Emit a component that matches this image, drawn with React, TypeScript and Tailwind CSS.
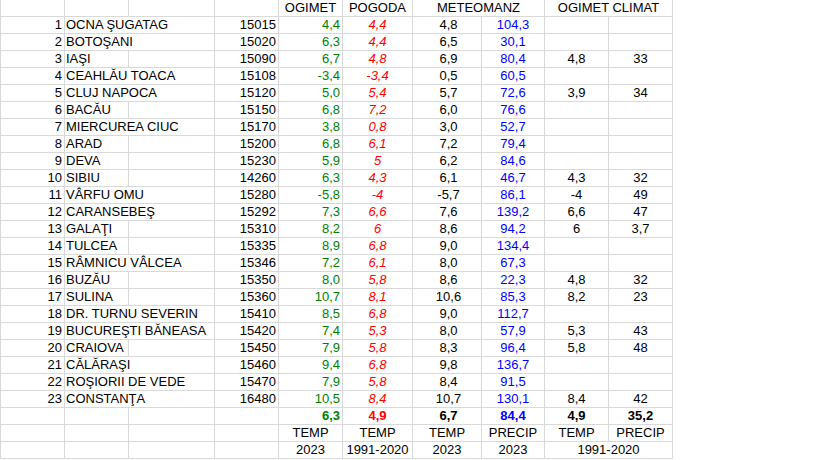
import type { ReactNode } from 'react';

type Row = {
  nr: number;
  name: string;
  code: string;
  ogimet: string;
  pogoda: string;
  mTemp: string;
  mPrecip: string;
  cTemp?: string;
  cPrecip?: string;
};

const rows: Row[] = [
  { nr: 1, name: 'OCNA ŞUGATAG', code: '15015', ogimet: '4,4', pogoda: '4,4', mTemp: '4,8', mPrecip: '104,3' },
  { nr: 2, name: 'BOTOŞANI', code: '15020', ogimet: '6,3', pogoda: '4,4', mTemp: '6,5', mPrecip: '30,1' },
  { nr: 3, name: 'IAŞI', code: '15090', ogimet: '6,7', pogoda: '4,8', mTemp: '6,9', mPrecip: '80,4', cTemp: '4,8', cPrecip: '33' },
  { nr: 4, name: 'CEAHLĂU TOACA', code: '15108', ogimet: '-3,4', pogoda: '-3,4', mTemp: '0,5', mPrecip: '60,5' },
  { nr: 5, name: 'CLUJ NAPOCA', code: '15120', ogimet: '5,0', pogoda: '5,4', mTemp: '5,7', mPrecip: '72,6', cTemp: '3,9', cPrecip: '34' },
  { nr: 6, name: 'BACĂU', code: '15150', ogimet: '6,8', pogoda: '7,2', mTemp: '6,0', mPrecip: '76,6' },
  { nr: 7, name: 'MIERCUREA CIUC', code: '15170', ogimet: '3,8', pogoda: '0,8', mTemp: '3,0', mPrecip: '52,7' },
  { nr: 8, name: 'ARAD', code: '15200', ogimet: '6,8', pogoda: '6,1', mTemp: '7,2', mPrecip: '79,4' },
  { nr: 9, name: 'DEVA', code: '15230', ogimet: '5,9', pogoda: '5', mTemp: '6,2', mPrecip: '84,6' },
  { nr: 10, name: 'SIBIU', code: '14260', ogimet: '6,3', pogoda: '4,3', mTemp: '6,1', mPrecip: '46,7', cTemp: '4,3', cPrecip: '32' },
  { nr: 11, name: 'VÂRFU OMU', code: '15280', ogimet: '-5,8', pogoda: '-4', mTemp: '-5,7', mPrecip: '86,1', cTemp: '-4', cPrecip: '49' },
  { nr: 12, name: 'CARANSEBEŞ', code: '15292', ogimet: '7,3', pogoda: '6,6', mTemp: '7,6', mPrecip: '139,2', cTemp: '6,6', cPrecip: '47' },
  { nr: 13, name: 'GALAŢI', code: '15310', ogimet: '8,2', pogoda: '6', mTemp: '8,6', mPrecip: '94,2', cTemp: '6', cPrecip: '3,7' },
  { nr: 14, name: 'TULCEA', code: '15335', ogimet: '8,9', pogoda: '6,8', mTemp: '9,0', mPrecip: '134,4' },
  { nr: 15, name: 'RÂMNICU VÂLCEA', code: '15346', ogimet: '7,2', pogoda: '6,1', mTemp: '8,0', mPrecip: '67,3' },
  { nr: 16, name: 'BUZĂU', code: '15350', ogimet: '8,0', pogoda: '5,8', mTemp: '8,6', mPrecip: '22,3', cTemp: '4,8', cPrecip: '32' },
  { nr: 17, name: 'SULINA', code: '15360', ogimet: '10,7', pogoda: '8,1', mTemp: '10,6', mPrecip: '85,3', cTemp: '8,2', cPrecip: '23' },
  { nr: 18, name: 'DR. TURNU SEVERIN', code: '15410', ogimet: '8,5', pogoda: '6,8', mTemp: '9,0', mPrecip: '112,7' },
  { nr: 19, name: 'BUCUREŞTI BĂNEASA', code: '15420', ogimet: '7,4', pogoda: '5,3', mTemp: '8,0', mPrecip: '57,9', cTemp: '5,3', cPrecip: '43' },
  { nr: 20, name: 'CRAIOVA', code: '15450', ogimet: '7,9', pogoda: '5,8', mTemp: '8,3', mPrecip: '96,4', cTemp: '5,8', cPrecip: '48' },
  { nr: 21, name: 'CĂLĂRAŞI', code: '15460', ogimet: '9,4', pogoda: '6,8', mTemp: '9,8', mPrecip: '136,7' },
  { nr: 22, name: 'ROŞIORII DE VEDE', code: '15470', ogimet: '7,9', pogoda: '5,8', mTemp: '8,4', mPrecip: '91,5' },
  { nr: 23, name: 'CONSTANŢA', code: '16480', ogimet: '10,5', pogoda: '8,4', mTemp: '10,7', mPrecip: '130,1', cTemp: '8,4', cPrecip: '42' },
];

// names short enough to stay inside column B (grid line stays visible)
const shortNames = ['IAŞI', 'BACĂU', 'ARAD', 'DEVA', 'SIBIU', 'GALAŢI', 'TULCEA', 'BUZĂU', 'SULINA', 'CRAIOVA'];

const Cell = ({ children, className = '', first = false }: { children?: ReactNode; className?: string; first?: boolean }) => (
  <div
    className={`h-[17px] leading-[16px] whitespace-nowrap overflow-visible border-r border-b border-[#d9d9d9] ${first ? 'border-l' : ''} ${className}`}
  >
    {children}
  </div>
);

const EmptyLeft = () => (
  <>
    <Cell first />
    <Cell />
    <Cell />
    <Cell />
  </>
);

export default function App() {
  return (
    <div className="w-[819px] h-[460px] bg-white text-black text-[13px]" style={{ fontFamily: '"Liberation Sans", Arial, sans-serif' }}>
      <div className="grid w-[673px] grid-cols-[65px_64px_86px_64px_64px_70px_69px_63px_64px_64px]">
        {/* header */}
        <EmptyLeft />
        <Cell className="text-center">OGIMET</Cell>
        <Cell className="text-center">POGODA</Cell>
        <Cell className="col-span-2 text-center">METEOMANZ</Cell>
        <Cell className="col-span-2 text-center">OGIMET CLIMAT</Cell>

        {rows.map((r) => {
          const short = shortNames.includes(r.name);
          return (
            <div key={r.nr} className="contents">
              <Cell first className="text-right pr-[2px]">{r.nr}</Cell>
              {short ? (
                <>
                  <Cell className="pl-[1px]">{r.name}</Cell>
                  <Cell />
                </>
              ) : (
                <Cell className="col-span-2 pl-[1px]">{r.name}</Cell>
              )}
              <Cell className="text-right pr-[2px]">{r.code}</Cell>
              <Cell className="text-right pr-[2px] text-[#008000]">{r.ogimet}</Cell>
              <Cell className="text-center italic text-[#ff0000]">{r.pogoda}</Cell>
              <Cell className="text-center pl-[3px]">{r.mTemp}</Cell>
              <Cell className="text-center text-[#0000ff]">{r.mPrecip}</Cell>
              <Cell className="text-center">{r.cTemp}</Cell>
              <Cell className="text-center">{r.cPrecip}</Cell>
            </div>
          );
        })}

        {/* averages */}
        <EmptyLeft />
        <Cell className="text-right pr-[2px] font-bold text-[#008000]">6,3</Cell>
        <Cell className="text-center font-bold text-[#ff0000]">4,9</Cell>
        <Cell className="text-center pl-[3px] font-bold">6,7</Cell>
        <Cell className="text-center font-bold text-[#0000ff]">84,4</Cell>
        <Cell className="text-center font-bold">4,9</Cell>
        <Cell className="text-center font-bold">35,2</Cell>

        {/* labels */}
        <EmptyLeft />
        <Cell className="text-center">TEMP</Cell>
        <Cell className="text-center">TEMP</Cell>
        <Cell className="text-center">TEMP</Cell>
        <Cell className="text-center">PRECIP</Cell>
        <Cell className="text-center">TEMP</Cell>
        <Cell className="text-center">PRECIP</Cell>

        <EmptyLeft />
        <Cell className="text-center">2023</Cell>
        <Cell className="text-center">1991-2020</Cell>
        <Cell className="text-center">2023</Cell>
        <Cell className="text-center">2023</Cell>
        <Cell className="col-span-2 text-center">1991-2020</Cell>
      </div>
    </div>
  );
}
